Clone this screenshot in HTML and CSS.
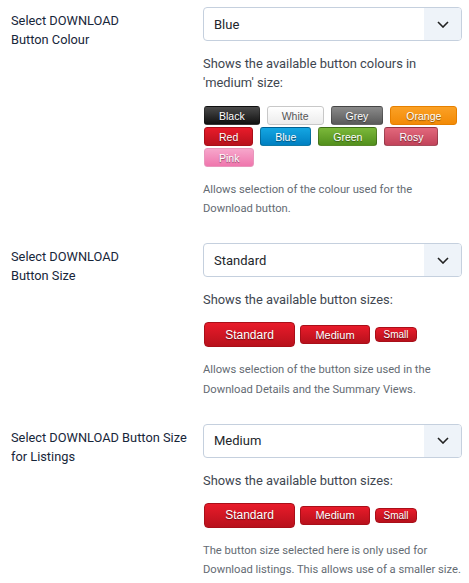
FILE: index.html
```html
<!DOCTYPE html>
<html lang="en">
<head>
	<meta charset="UTF-8">
	<title>Download button options</title>
	<link rel="stylesheet" href="styles.css">
</head>
<body>
	<div class="row">
		<div class="label">Select DOWNLOAD<br>Button Colour</div>
		<div class="control">
			<div class="select"><span>Blue</span><i class="caret"><svg width="12" height="7" viewBox="0 0 12 7"><path d="M1 1l5 5 5-5" fill="none" stroke="#222" stroke-width="1.6"/></svg></i></div>
			<p class="shows">Shows the available button colours in 'medium' size:</p>
			<div class="colours">
				<span class="btn black">Black</span>
				<span class="btn white">White</span>
				<span class="btn grey">Grey</span>
				<span class="btn orange">Orange</span>
				<span class="btn red">Red</span>
				<span class="btn blue">Blue</span>
				<span class="btn green">Green</span>
				<span class="btn rosy">Rosy</span>
				<span class="btn pink">Pink</span>
			</div>
			<p class="desc">Allows selection of the colour used for the Download button.</p>
		</div>
	</div>

	<div class="row">
		<div class="label">Select DOWNLOAD<br>Button Size</div>
		<div class="control">
			<div class="select"><span>Standard</span><i class="caret"><svg width="12" height="7" viewBox="0 0 12 7"><path d="M1 1l5 5 5-5" fill="none" stroke="#222" stroke-width="1.6"/></svg></i></div>
			<p class="shows">Shows the available button sizes:</p>
			<div class="sizes">
				<span class="btn red std">Standard</span>
				<span class="btn red med">Medium</span>
				<span class="btn red sml">Small</span>
			</div>
			<p class="desc">Allows selection of the button size used in the Download Details and the Summary Views.</p>
		</div>
	</div>

	<div class="row">
		<div class="label">Select DOWNLOAD Button Size for Listings</div>
		<div class="control">
			<div class="select"><span>Medium</span><i class="caret"><svg width="12" height="7" viewBox="0 0 12 7"><path d="M1 1l5 5 5-5" fill="none" stroke="#222" stroke-width="1.6"/></svg></i></div>
			<p class="shows">Shows the available button sizes:</p>
			<div class="sizes">
				<span class="btn red std">Standard</span>
				<span class="btn red med">Medium</span>
				<span class="btn red sml">Small</span>
			</div>
			<p class="desc">The button size selected here is only used for Download listings. This allows use of a smaller size.</p>
		</div>
	</div>
</body>
</html>
```

FILE: styles.css
```css
*{margin:0;padding:0;box-sizing:border-box}
body{margin:7px 7px 0 11px;font-family:Roboto,"Liberation Sans",sans-serif;color:#22262a;background:#fff}
.row{display:grid;grid-template-columns:192px 259px;margin-bottom:25px}
.label{font-size:12.8px;line-height:19px;padding-top:4px;color:#17263a}
.select{height:34px;border:1px solid #c5d0de;border-radius:4px;display:flex;align-items:center;justify-content:space-between;font-size:13px;overflow:hidden}
.select span{padding-left:10px}
.caret{width:37px;height:100%;background:#eef3f9;display:flex;align-items:center;justify-content:center}
.caret svg{display:block}
.shows{font-size:12.9px;line-height:19px;color:#3e4650;margin-top:13px}
.desc{font-size:11.2px;line-height:19.2px;color:#646b73;margin-top:13px}
.colours{display:flex;flex-wrap:wrap;gap:2px 7px;margin-top:14px;padding-left:1px}
.sizes{display:flex;align-items:center;gap:5px;margin-top:13px;padding-left:1px}
.btn{display:inline-flex;align-items:center;justify-content:center;height:19px;padding:0 14px;border-radius:3px;font-family:"Liberation Sans",Arial,sans-serif;font-size:10.5px;color:#fff;text-shadow:0 1px 1px rgba(0,0,0,.45);border:1px solid rgba(0,0,0,.25)}
.black{background:linear-gradient(#4a4a4a,#111)}
.white{background:linear-gradient(#fff,#ececec);color:#555;text-shadow:none;border-color:#c8c8c8}
.grey{background:linear-gradient(#8a8a8a,#5a5a5a)}
.orange{background:linear-gradient(#fba126,#f28a06);padding:0 15px;border-color:#e68000}
.red{background:linear-gradient(#e81b2a,#b8111c);border-color:#a90f19;padding:0 14px}
.blue{background:linear-gradient(#14a6e2,#0080c2)}
.green{background:linear-gradient(#7bb83a,#52901c)}
.rosy{background:linear-gradient(#e2687c,#c2435a)}
.pink{background:linear-gradient(#f7a6cb,#ef76ad);border-color:#e896bc}
.std{width:91px;height:25px;font-size:12px;border-radius:4px;padding:0}
.med{width:70px;height:19px;font-size:11px;padding:0}
.sml{width:42px;height:15px;font-size:10px;padding:0;border-radius:4px}
```
